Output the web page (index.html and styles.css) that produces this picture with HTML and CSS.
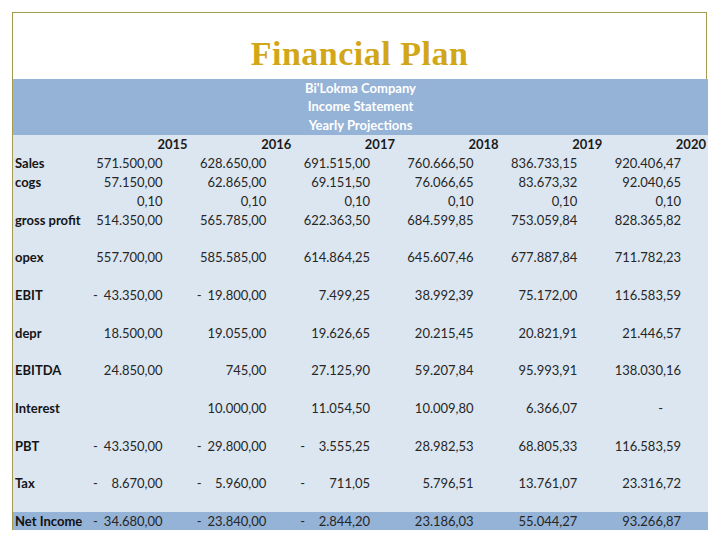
FILE: index.html
```html
<!DOCTYPE html>
<html>
<head>
<meta charset="utf-8">
<link rel="stylesheet" href="styles.css">
</head>
<body>
<div class="page">
  <div class="frame">
    <h1 class="title">Financial Plan</h1>
    <div class="sheet">
      <div class="band">
        <div class="hrow">Bi'Lokma Company</div>
        <div class="hrow">Income Statement</div>
        <div class="hrow">Yearly Projections</div>
      </div>
      <div class="row years">
        <div></div><div>2015</div><div>2016</div><div>2017</div><div>2018</div><div>2019</div><div>2020</div>
      </div>
      <div class="row">
        <div class="lbl">Sales</div>
        <div class="num"><span class="v">571.500,00</span></div>
        <div class="num"><span class="v">628.650,00</span></div>
        <div class="num"><span class="v">691.515,00</span></div>
        <div class="num"><span class="v">760.666,50</span></div>
        <div class="num"><span class="v">836.733,15</span></div>
        <div class="num"><span class="v">920.406,47</span></div>
      </div>
      <div class="row">
        <div class="lbl">cogs</div>
        <div class="num"><span class="v">57.150,00</span></div>
        <div class="num"><span class="v">62.865,00</span></div>
        <div class="num"><span class="v">69.151,50</span></div>
        <div class="num"><span class="v">76.066,65</span></div>
        <div class="num"><span class="v">83.673,32</span></div>
        <div class="num"><span class="v">92.040,65</span></div>
      </div>
      <div class="row">
        <div class="lbl"></div>
        <div class="num"><span class="v">0,10</span></div>
        <div class="num"><span class="v">0,10</span></div>
        <div class="num"><span class="v">0,10</span></div>
        <div class="num"><span class="v">0,10</span></div>
        <div class="num"><span class="v">0,10</span></div>
        <div class="num"><span class="v">0,10</span></div>
      </div>
      <div class="row">
        <div class="lbl">gross profit</div>
        <div class="num"><span class="v">514.350,00</span></div>
        <div class="num"><span class="v">565.785,00</span></div>
        <div class="num"><span class="v">622.363,50</span></div>
        <div class="num"><span class="v">684.599,85</span></div>
        <div class="num"><span class="v">753.059,84</span></div>
        <div class="num"><span class="v">828.365,82</span></div>
      </div>
      <div class="row"></div>
      <div class="row">
        <div class="lbl">opex</div>
        <div class="num"><span class="v">557.700,00</span></div>
        <div class="num"><span class="v">585.585,00</span></div>
        <div class="num"><span class="v">614.864,25</span></div>
        <div class="num"><span class="v">645.607,46</span></div>
        <div class="num"><span class="v">677.887,84</span></div>
        <div class="num"><span class="v">711.782,23</span></div>
      </div>
      <div class="row"></div>
      <div class="row">
        <div class="lbl">EBIT</div>
        <div class="num"><span class="neg">-</span><span class="v">43.350,00</span></div>
        <div class="num"><span class="neg">-</span><span class="v">19.800,00</span></div>
        <div class="num"><span class="v">7.499,25</span></div>
        <div class="num"><span class="v">38.992,39</span></div>
        <div class="num"><span class="v">75.172,00</span></div>
        <div class="num"><span class="v">116.583,59</span></div>
      </div>
      <div class="row"></div>
      <div class="row">
        <div class="lbl">depr</div>
        <div class="num"><span class="v">18.500,00</span></div>
        <div class="num"><span class="v">19.055,00</span></div>
        <div class="num"><span class="v">19.626,65</span></div>
        <div class="num"><span class="v">20.215,45</span></div>
        <div class="num"><span class="v">20.821,91</span></div>
        <div class="num"><span class="v">21.446,57</span></div>
      </div>
      <div class="row"></div>
      <div class="row">
        <div class="lbl">EBITDA</div>
        <div class="num"><span class="v">24.850,00</span></div>
        <div class="num"><span class="v">745,00</span></div>
        <div class="num"><span class="v">27.125,90</span></div>
        <div class="num"><span class="v">59.207,84</span></div>
        <div class="num"><span class="v">95.993,91</span></div>
        <div class="num"><span class="v">138.030,16</span></div>
      </div>
      <div class="row"></div>
      <div class="row">
        <div class="lbl">Interest</div>
        <div class="num"></div>
        <div class="num"><span class="v">10.000,00</span></div>
        <div class="num"><span class="v">11.054,50</span></div>
        <div class="num"><span class="v">10.009,80</span></div>
        <div class="num"><span class="v">6.366,07</span></div>
        <div class="num zero"><span class="v">-</span></div>
      </div>
      <div class="row"></div>
      <div class="row">
        <div class="lbl">PBT</div>
        <div class="num"><span class="neg">-</span><span class="v">43.350,00</span></div>
        <div class="num"><span class="neg">-</span><span class="v">29.800,00</span></div>
        <div class="num"><span class="neg">-</span><span class="v">3.555,25</span></div>
        <div class="num"><span class="v">28.982,53</span></div>
        <div class="num"><span class="v">68.805,33</span></div>
        <div class="num"><span class="v">116.583,59</span></div>
      </div>
      <div class="row"></div>
      <div class="row">
        <div class="lbl">Tax</div>
        <div class="num"><span class="neg">-</span><span class="v">8.670,00</span></div>
        <div class="num"><span class="neg">-</span><span class="v">5.960,00</span></div>
        <div class="num"><span class="neg">-</span><span class="v">711,05</span></div>
        <div class="num"><span class="v">5.796,51</span></div>
        <div class="num"><span class="v">13.761,07</span></div>
        <div class="num"><span class="v">23.316,72</span></div>
      </div>
      <div class="row"></div>
      <div class="row total">
        <div class="lbl">Net Income</div>
        <div class="num"><span class="neg">-</span><span class="v">34.680,00</span></div>
        <div class="num"><span class="neg">-</span><span class="v">23.840,00</span></div>
        <div class="num"><span class="neg">-</span><span class="v">2.844,20</span></div>
        <div class="num"><span class="v">23.186,03</span></div>
        <div class="num"><span class="v">55.044,27</span></div>
        <div class="num"><span class="v">93.266,87</span></div>
      </div>
    </div>
  </div>
</div>
</body>
</html>
```

FILE: styles.css
```css
html, body {
  margin: 0;
  padding: 0;
  background: #ffffff;
}

.page {
  padding: 12px 12px 0 12px;
  width: 720px;
  height: 540px;
  box-sizing: border-box;
  overflow: hidden;
}

.frame {
  width: 695px;
  border-top: 1px solid #a49b4e;
  border-left: 1px solid #a49b4e;
  border-right: 1px solid #a49b4e;
  box-sizing: border-box;
}

.title {
  margin: 0;
  height: 65.6px;
  box-sizing: border-box;
  padding-top: 24px;
  text-align: center;
  font-family: "Liberation Serif", serif;
  font-weight: bold;
  font-size: 34px;
  line-height: 34px;
  letter-spacing: 0.5px;
  color: #d2a619;
}

.sheet {
  width: 695px;
  margin-right: -2px;
  background: #dce6f1;
  font-family: Lato, "Open Sans", sans-serif;
  font-size: 13px;
  color: #262626;
}

.band {
  background: #95b3d7;
}

.hrow {
  height: 18.83px;
  line-height: 18.83px;
  text-align: center;
  color: #ffffff;
  font-weight: bold;
}

.row {
  display: grid;
  grid-template-columns: 73px repeat(6, 1fr);
  height: 18.83px;
  align-items: center;
  white-space: nowrap;
}

.years div {
  text-align: right;
  font-weight: bold;
  color: #1a1a1a;
  padding-right: 2px;
}

.lbl {
  padding-left: 2px;
  font-weight: bold;
  color: #151515;
}

.num {
  display: flex;
  justify-content: space-between;
  padding: 0 27px 0 7px;
}

.num .v {
  margin-left: auto;
}

.num.zero {
  padding-right: 45px;
}

.total {
  background: #95b3d7;
}

.total .lbl {
  color: #111111;
}
```
